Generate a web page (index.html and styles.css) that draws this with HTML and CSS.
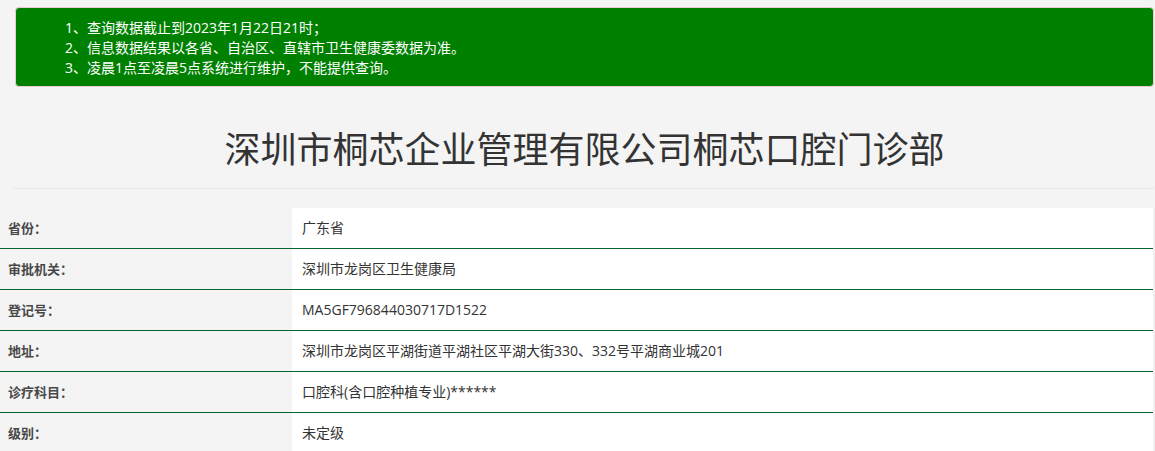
FILE: index.html
```html
<!DOCTYPE html>
<html lang="zh-CN">
<head>
<meta charset="utf-8">
<title>深圳市桐芯企业管理有限公司桐芯口腔门诊部</title>
<link rel="stylesheet" href="styles.css">
</head>
<body>
<div class="container">
  <div class="notice">
    <ul class="notice-list">
      <li>1、查询数据截止到2023年1月22日21时；</li>
      <li>2、信息数据结果以各省、自治区、直辖市卫生健康委数据为准。</li>
      <li>3、凌晨1点至凌晨5点系统进行维护，不能提供查询。</li>
    </ul>
  </div>
  <h1 class="title">深圳市桐芯企业管理有限公司桐芯口腔门诊部</h1>
  <hr class="divider">
</div>
<table class="info">
  <tbody>
    <tr><th>省份：</th><td>广东省</td></tr>
    <tr><th>审批机关：</th><td>深圳市龙岗区卫生健康局</td></tr>
    <tr><th>登记号：</th><td>MA5GF796844030717D1522</td></tr>
    <tr><th>地址：</th><td>深圳市龙岗区平湖街道平湖社区平湖大街330、332号平湖商业城201</td></tr>
    <tr><th>诊疗科目：</th><td>口腔科(含口腔种植专业)******</td></tr>
    <tr><th>级别：</th><td>未定级</td></tr>
  </tbody>
</table>
</body>
</html>
```

FILE: styles.css
```css
html, body {
  margin: 0;
  padding: 0;
  background: #f4f4f4;
  color: #333;
  font-family: "Open Sans", "Noto Sans CJK SC", sans-serif;
  font-size: 14px;
  overflow: hidden;
}

.container {
  margin: 0 1px 0 15px;
  padding-top: 7px;
}

.notice {
  background: #008000;
  border: 1px solid #ebccd1;
  border-radius: 4px;
  padding: 10px 15px 8px 15px;
  color: #fff;
}

.notice-list {
  list-style: none;
  margin: 0;
  padding: 0 0 0 34px;
  line-height: 20px;
  font-size: 14px;
}

.title {
  margin: 0;
  padding-top: 39px;
  height: 62px;
  line-height: 48px;
  font-size: 36px;
  font-weight: 400;
  text-align: center;
  color: #333;
}

.divider {
  margin: 0 0 19px -1px;
  border: 0;
  border-top: 1px solid #e6e6e6;
  height: 0;
}

.info {
  width: 100%;
  border-collapse: collapse;
}

.info th,
.info td {
  height: 40px;
  padding: 0;
  border-bottom: 1px solid #00652e;
  vertical-align: middle;
  text-align: left;
  line-height: 18px;
}

.info th {
  width: 284px;
  padding-left: 8px;
  font-size: 13px;
  font-weight: 700;
  color: #484848;
}

.info td {
  background: #fff;
  padding-left: 10px;
  font-size: 14px;
  color: #333;
  border-right: 2px solid #f0f0f0;
}

.info th > *, .info td > * {
  margin: 0;
}
```
